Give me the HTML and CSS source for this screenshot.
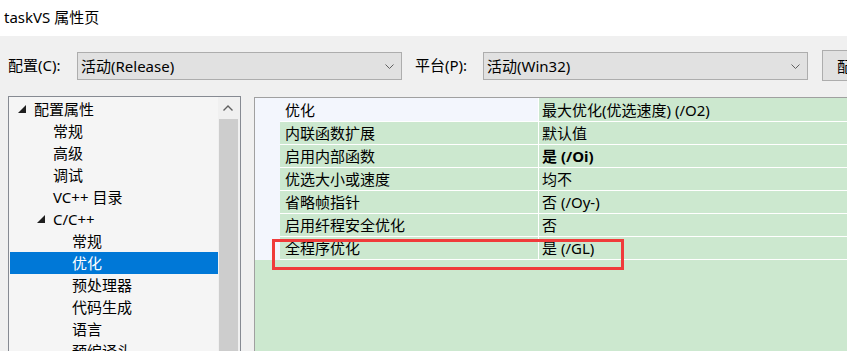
FILE: index.html
```html
<!DOCTYPE html>
<html lang="zh-CN">
<head>
    <meta charset="UTF-8">
    <meta name="viewport" content="width=device-width, initial-scale=1.0">
    <title>taskVS 属性页</title>
    <link rel="stylesheet" href="styles.css">
</head>
<body>

    <div class="titlebar">taskVS 属性页</div>

    <div class="toolbar">
        <span class="label label-config">配置(C):</span>
        <div class="combo">
            <span class="combo-text">活动(Release)</span>
            <svg class="chevron" width="9" height="5" viewBox="0 0 9 5"><polyline points="0.5,0.5 4.5,4.5 8.5,0.5" fill="none" stroke="#606060" stroke-width="1"/></svg>
        </div>
        <span class="label label-platform">平台(P):</span>
        <div class="combo">
            <span class="combo-text">活动(Win32)</span>
            <svg class="chevron" width="9" height="5" viewBox="0 0 9 5"><polyline points="0.5,0.5 4.5,4.5 8.5,0.5" fill="none" stroke="#606060" stroke-width="1"/></svg>
        </div>
        <button class="manager">配置管理器(O)...</button>
    </div>

    <div class="main">
        <!-- left tree -->
        <div class="tree">
            <ul class="tree-list">
                <li class="node lvl1"><svg class="arrow" width="8" height="8" viewBox="0 0 8 8"><polygon points="8,0 8,8 0,8" fill="#1e1e1e"/></svg>配置属性</li>
                <li class="node lvl2">常规</li>
                <li class="node lvl2">高级</li>
                <li class="node lvl2">调试</li>
                <li class="node lvl2">VC++ 目录</li>
                <li class="node lvl2 open"><svg class="arrow" width="8" height="8" viewBox="0 0 8 8"><polygon points="8,0 8,8 0,8" fill="#1e1e1e"/></svg>C/C++</li>
                <li class="node lvl3">常规</li>
                <li class="node lvl3 selected">优化</li>
                <li class="node lvl3">预处理器</li>
                <li class="node lvl3">代码生成</li>
                <li class="node lvl3">语言</li>
                <li class="node lvl3">预编译头</li>
                <li class="node lvl3">输出文件</li>
            </ul>
            <div class="scrollbar">
                <div class="scroll-btn">
                    <svg width="10" height="6" viewBox="0 0 10 6"><polyline points="0.5,5.5 5,1 9.5,5.5" fill="none" stroke="#606060" stroke-width="1.4"/></svg>
                </div>
                <div class="scroll-thumb"></div>
            </div>
        </div>

        <!-- property grid -->
        <div class="grid">
            <div class="row first">
                <div class="gutter"></div>
                <div class="name plain">优化</div>
                <div class="value">最大优化(优选速度) (/O2)</div>
            </div>
            <div class="row">
                <div class="gutter"></div>
                <div class="name">内联函数扩展</div>
                <div class="value">默认值</div>
            </div>
            <div class="row">
                <div class="gutter"></div>
                <div class="name">启用内部函数</div>
                <div class="value bold">是 (/Oi)</div>
            </div>
            <div class="row">
                <div class="gutter"></div>
                <div class="name">优选大小或速度</div>
                <div class="value">均不</div>
            </div>
            <div class="row">
                <div class="gutter"></div>
                <div class="name">省略帧指针</div>
                <div class="value">否 (/Oy-)</div>
            </div>
            <div class="row">
                <div class="gutter"></div>
                <div class="name">启用纤程安全优化</div>
                <div class="value">否</div>
            </div>
            <div class="row">
                <div class="gutter"></div>
                <div class="name">全程序优化</div>
                <div class="value">是 (/GL)</div>
            </div>
        </div>
    </div>

    <div class="highlight"></div>

</body>
</html>
```

FILE: styles.css
```css
html, body {
    margin: 0;
    padding: 0;
}

body {
    width: 847px;
    height: 351px;
    overflow: hidden;
    position: relative;
    background-color: #f0f0f0;
    font-family: "Noto Sans", "Noto Sans CJK SC", sans-serif;
    font-size: 15px;
    color: #000;
}

.titlebar {
    height: 36px;
    line-height: 34px;
    padding-left: 4px;
    background-color: #ffffff;
}

.toolbar {
    height: 44px;
    padding-top: 16px;
    padding-left: 8px;
    display: flex;
    align-items: flex-start;
    white-space: nowrap;
}

.toolbar > * {
    flex-shrink: 0;
}

.label {
    height: 28px;
    line-height: 27px;
}

.label-config {
    width: 69px;
}

.label-platform {
    width: 68px;
    margin-left: 13px;
}

.combo {
    box-sizing: border-box;
    width: 325px;
    height: 28px;
    border: 1px solid #adadad;
    background-color: #e1e1e1;
    display: flex;
    align-items: center;
    justify-content: space-between;
    padding: 0 7px 0 3px;
}

.combo-text {
    line-height: 24px;
}

.chevron {
    display: block;
    margin-top: 1px;
}

.manager {
    box-sizing: border-box;
    margin-top: -2px;
    margin-left: 14px;
    height: 31px;
    width: 140px;
    border: 1px solid #adadad;
    background-color: #e1e1e1;
    font-family: inherit;
    font-size: 15px;
    color: #000;
    text-align: left;
    padding: 0 0 0 14px;
}

.main {
    height: 255px;
    padding-left: 8px;
    display: flex;
    gap: 13px;
    overflow: hidden;
}

/* tree */
.tree {
    box-sizing: border-box;
    width: 233px;
    height: 320px;
    flex-shrink: 0;
    border: 1px solid #868a92;
    background-color: #f5f5f5;
    display: flex;
}

.tree-list {
    list-style: none;
    margin: 0;
    padding: 1px 0 0 1px;
    width: 208px;
}

.node {
    height: 22px;
    line-height: 22px;
    display: flex;
    align-items: center;
    white-space: nowrap;
}

.node .arrow {
    display: block;
    margin-right: 8px;
    margin-top: -1px;
}

.lvl1 {
    padding-left: 8px;
}

.lvl2 {
    padding-left: 43px;
}

.lvl2.open {
    padding-left: 27px;
}

.lvl3 {
    padding-left: 62px;
}

.selected {
    background-color: #0078d7;
    color: #ffffff;
}

.scrollbar {
    width: 22px;
    background-color: #f0f0f0;
}

.scroll-btn {
    height: 22px;
    display: flex;
    align-items: center;
    justify-content: center;
}

.scroll-btn svg {
    display: block;
    margin-left: -2px;
}

.scroll-thumb {
    height: 300px;
    margin: 0 2px 0 1px;
    background-color: #cdcdcd;
}

/* property grid */
.grid {
    box-sizing: border-box;
    margin-top: 1px;
    width: 620px;
    height: 320px;
    flex-shrink: 0;
    border: 1px solid #a0a0a0;
    background-color: #cce8cf;
}

.row {
    display: flex;
    height: 23px;
    white-space: nowrap;
}

.row.first {
    height: 24px;
}

.gutter {
    width: 25px;
    background-color: #f3f6fd;
}

.name {
    width: 253px;
    padding-left: 5px;
    border-right: 1px solid #ffffff;
    border-bottom: 1px solid #ffffff;
    line-height: 22px;
}

.name.plain {
    background-color: #f3f6fd;
}

.value {
    flex: 1;
    padding-left: 3px;
    border-bottom: 1px solid #ffffff;
    line-height: 22px;
}

.first .name,
.first .value {
    line-height: 24px;
}

.bold {
    font-weight: bold;
}

.highlight {
    position: absolute;
    box-sizing: border-box;
    left: 272px;
    top: 239px;
    width: 352px;
    height: 31px;
    border: 3px solid #f03b3b;
}
```
